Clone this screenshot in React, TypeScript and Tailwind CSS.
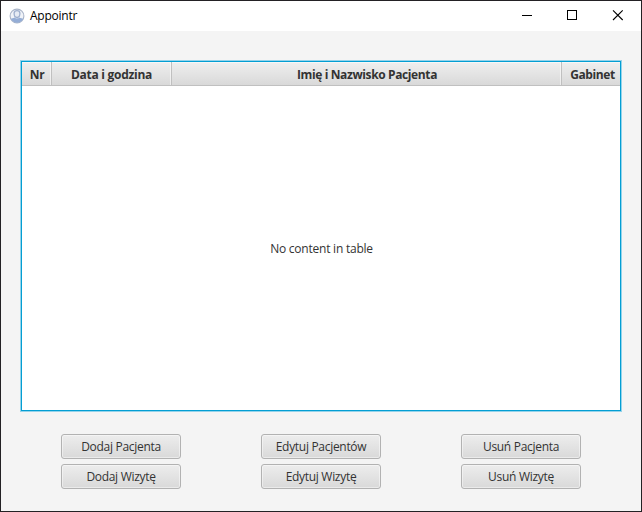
import React from "react";

const columns = [
  { label: "Nr", width: "w-[30px]", text: "pl-px tracking-[-0.3px]" },
  { label: "Data i godzina", width: "w-[120px]", text: "tracking-[-0.28px]" },
  { label: "Imię i Nazwisko Pacjenta", width: "w-[390px]", text: "pl-px tracking-[-0.38px]" },
  { label: "Gabinet", width: "w-[60px]", text: "pl-[2px] tracking-[-0.4px]" },
];

const actions = [
  ["Dodaj Pacjenta", "Dodaj Wizytę"],
  ["Edytuj Pacjentów", "Edytuj Wizytę"],
  ["Usuń Pacjenta", "Usuń Wizytę"],
];

function UserIcon() {
  return (
    <svg width="16" height="16" viewBox="0 0 16 16">
      <defs>
        <clipPath id="disc">
          <circle cx="8" cy="8" r="6.8" />
        </clipPath>
      </defs>
      <circle cx="8" cy="8" r="6.9" fill="#f0f3f8" stroke="#a9b4c8" strokeWidth="1.1" />
      <path
        d="M0 16V12C2 10.6 4.2 10.4 5.6 9.6C6.6 10.8 9.4 10.8 10.4 9.6C11.8 10.4 14 10.6 16 12V16Z"
        fill="#94add6"
        clipPath="url(#disc)"
      />
      <path
        d="M5.1 5.3C5.1 3.5 6.4 2.6 8 2.6S10.9 3.5 10.9 5.3C10.9 7.6 9.7 9.5 8 9.5S5.1 7.6 5.1 5.3Z"
        fill="#e6ebf4"
        stroke="#9eafcd"
        strokeWidth="1.3"
      />
    </svg>
  );
}

function TitleBar() {
  return (
    <header className="flex h-[30px] shrink-0 items-center bg-white text-black">
      <div className="flex flex-1 items-center gap-[5px] pl-2">
        <UserIcon />
        <span className="text-[12px] leading-4 tracking-[-0.25px]">Appointr</span>
      </div>
      <svg width="136" height="30" viewBox="0 0 136 30" fill="none" stroke="#000" shapeRendering="crispEdges">
        <path d="M17 14.5H27" />
        <rect x="62.5" y="9.5" width="9" height="9" />
        <path d="M108 9.3L117.7 19M117.7 9.3L108 19" shapeRendering="auto" strokeWidth="1.1" />
      </svg>
    </header>
  );
}

function ActionButton({ label }: { label: string }) {
  return (
    <button className="flex h-[25px] w-[120px] items-center justify-center rounded-[3px] border border-[#b2b2b2] bg-linear-to-b from-[#ededed] to-[#d9d9d9] text-[12px] leading-4 tracking-[-0.3px] text-[#333] shadow-[inset_0_0_0_1px_rgba(255,255,255,0.45)]">
      {label}
    </button>
  );
}

export default function App() {
  return (
    <div className="flex h-[512px] w-[642px] flex-col overflow-hidden border border-[#232124] bg-[#f4f4f4] font-['Open_Sans','Noto_Sans',sans-serif]">
      <TitleBar />
      <main className="flex flex-col px-5 pt-[30px] text-[#333]">
        <section className="flex h-[350px] w-[600px] flex-col border border-[#039ed3] bg-white shadow-[0_0_0_1px_#95d3ea]">
          <div className="flex h-6 shrink-0 overflow-hidden border-b border-[#c0c0c0] bg-linear-to-b from-[#efefef] to-[#d9d9d9]">
            {columns.map((c) => (
              <div
                key={c.label}
                className={`flex shrink-0 items-center justify-center border-r border-[#c0c0c0] pt-[3px] text-[12px] leading-4 font-bold shadow-[inset_-1px_1px_0_rgba(255,255,255,0.5)] ${c.width} ${c.text}`}
              >
                {c.label}
              </div>
            ))}
          </div>
          <div className="flex flex-1 items-center justify-center pt-[2px] pl-px text-[12px] tracking-[-0.23px]">
            No content in table
          </div>
        </section>
        <div className="flex justify-between px-10 pt-[23px]">
          {actions.map((group) => (
            <div key={group[0]} className="flex flex-col gap-[5px]">
              {group.map((label) => (
                <ActionButton key={label} label={label} />
              ))}
            </div>
          ))}
        </div>
      </main>
    </div>
  );
}
